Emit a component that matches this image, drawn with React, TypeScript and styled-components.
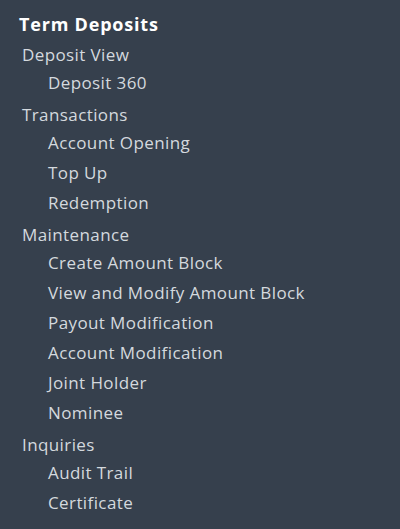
import React from "react";
import styled, { createGlobalStyle } from "styled-components";

const GlobalStyle = createGlobalStyle`
  html, body {
    margin: 0;
    padding: 0;
    background: #36404d;
  }
`;

const Panel = styled.nav`
  width: 400px;
  height: 529px;
  box-sizing: border-box;
  background: #36404d;
  padding: 12px 0 0 19px;
  font-family: "Open Sans", "Noto Sans", sans-serif;
  color: #d4d9de;
  overflow: hidden;
`;

const Title = styled.h2`
  margin: 0 0 5px;
  font-size: 18px;
  font-weight: 700;
  line-height: 24px;
  letter-spacing: 0.8px;
  color: #ffffff;
`;

const Section = styled.div`
  margin-bottom: 3px;
`;

const Heading = styled.div`
  font-size: 17px;
  line-height: 27px;
  letter-spacing: 0.4px;
  padding-left: 3px;
`;

const Item = styled.a`
  display: block;
  font-size: 17px;
  line-height: 30px;
  letter-spacing: 0.4px;
  padding-left: 29px;
  color: inherit;
  text-decoration: none;
  cursor: pointer;
`;

const menu: { heading: string; items: string[] }[] = [
  { heading: "Deposit View", items: ["Deposit 360"] },
  { heading: "Transactions", items: ["Account Opening", "Top Up", "Redemption"] },
  {
    heading: "Maintenance",
    items: [
      "Create Amount Block",
      "View and Modify Amount Block",
      "Payout Modification",
      "Account Modification",
      "Joint Holder",
      "Nominee",
    ],
  },
  { heading: "Inquiries", items: ["Audit Trail", "Certificate"] },
];

export default function App() {
  return (
    <>
      <GlobalStyle />
      <Panel>
        <Title>Term Deposits</Title>
        {menu.map((section) => (
          <Section key={section.heading}>
            <Heading>{section.heading}</Heading>
            {section.items.map((item) => (
              <Item key={item}>{item}</Item>
            ))}
          </Section>
        ))}
      </Panel>
    </>
  );
}
